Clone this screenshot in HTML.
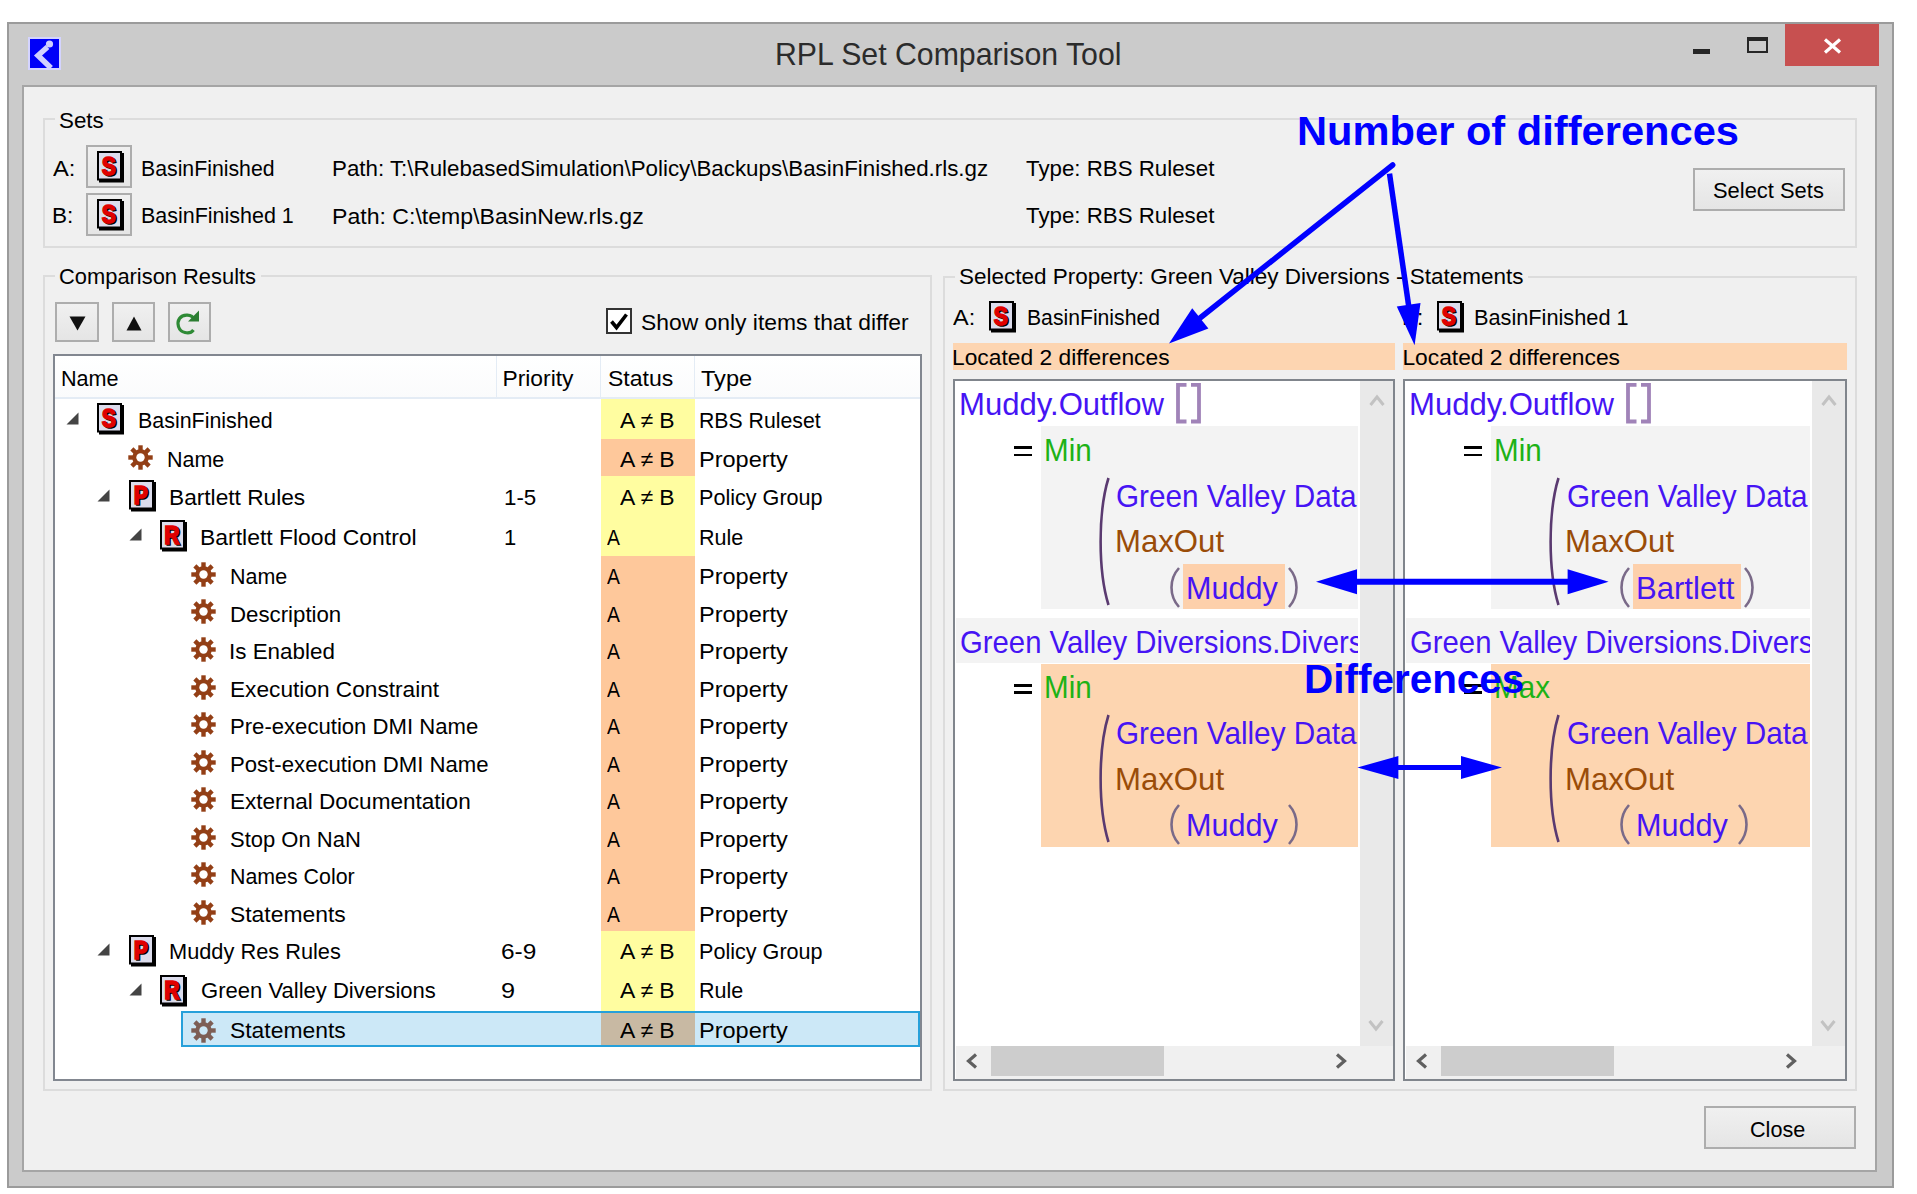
<!DOCTYPE html>
<html><head><meta charset="utf-8"><title>RPL Set Comparison Tool</title>
<style>
html,body{margin:0;padding:0;background:#fff;}
body{width:1917px;height:1194px;position:relative;overflow:hidden;font-family:"Liberation Sans",sans-serif;}
.t{position:absolute;white-space:pre;transform-origin:0 0;}
.r{position:absolute;}
svg.r{overflow:visible;}
</style></head><body>
<div class="r" style="left:7.0px;top:22.0px;width:1887.0px;height:1166.0px;background:#cbcbcb;border:2px solid #9b9b9b;box-sizing:border-box;"></div>
<svg class="r" style="left:28.0px;top:37.0px;" width="33" height="33" viewBox="0 0 33 33"><rect x="0" y="0" width="33" height="33" fill="#d4d4ff"/><rect x="2" y="2" width="29" height="29" fill="#0000f8"/><path d="M19.5 10 L 10 18.5 L 23 31" fill="none" stroke="#d0d0ff" stroke-width="5.5"/><circle cx="21.5" cy="7" r="3.6" fill="#d0d0ff"/><rect x="2" y="31" width="29" height="2" fill="#d4d4ff"/></svg>
<div class="t" style="left:775.48px;top:38.93px;font-size:31.5px;line-height:31.5px;color:#2b2b2b;font-weight:normal;transform:scaleX(0.9606);">RPL Set Comparison Tool</div>
<div class="r" style="left:1693.0px;top:49.0px;width:17.0px;height:4.5px;background:#262626;"></div>
<div class="r" style="left:1747.0px;top:36.6px;width:21.0px;height:16.4px;border:2px solid #262626;box-sizing:border-box;border-top-width:4px;"></div>
<div class="r" style="left:1785.0px;top:24.0px;width:93.5px;height:41.7px;background:#c75050;"></div>
<svg class="r" style="left:1823.0px;top:38.0px;" width="19" height="16" viewBox="0 0 19 16"><path d="M2 1.5 L17 14.5 M17 1.5 L2 14.5" stroke="#fff" stroke-width="3.2"/></svg>
<div class="r" style="left:22.0px;top:85.0px;width:1855.0px;height:1087.0px;background:#f0f0f0;border:2px solid #a5a5a5;box-sizing:border-box;"></div>
<div class="r" style="left:43.0px;top:118.0px;width:1814.0px;height:130.0px;border:2px solid #dcdcdc;box-sizing:border-box;"></div>
<div class="r" style="left:55.3px;top:114.0px;width:53.4px;height:9.0px;background:#f0f0f0;"></div>
<div class="t" style="left:59.32px;top:108.90px;font-size:22.8px;line-height:22.8px;color:#000;font-weight:normal;transform:scaleX(0.9815);">Sets</div>
<div class="t" style="left:52.90px;top:156.70px;font-size:22.8px;line-height:22.8px;color:#000;font-weight:normal;transform:scaleX(1.0393);">A:</div>
<div class="t" style="left:51.91px;top:204.40px;font-size:22.8px;line-height:22.8px;color:#000;font-weight:normal;transform:scaleX(0.9893);">B:</div>
<div class="r" style="left:86.4px;top:145.4px;width:45.6px;height:43.0px;background:linear-gradient(#f0f0f0,#e5e5e5);border:2px solid #adadad;box-sizing:border-box;"></div>
<svg class="r" style="left:97.0px;top:151.3px;" width="27" height="32" viewBox="0 0 27 32"><rect x="2" y="2" width="25" height="29.5" fill="#000"/><rect x="0" y="0" width="25" height="29.5" fill="#000"/><rect x="2" y="2" width="21" height="25.5" fill="#dcdcec"/><text transform="translate(13.2 25.0) scale(0.8 0.97)" text-anchor="middle" font-family="Liberation Sans" font-weight="bold" font-size="26" fill="#000" stroke="#000" stroke-width="1.6">S</text><text transform="translate(11.7 23.5) scale(0.8 0.97)" text-anchor="middle" font-family="Liberation Sans" font-weight="bold" font-size="26" fill="#e00000" stroke="#e00000" stroke-width="1.6">S</text></svg>
<div class="r" style="left:86.4px;top:193.3px;width:45.6px;height:43.0px;background:linear-gradient(#f0f0f0,#e5e5e5);border:2px solid #adadad;box-sizing:border-box;"></div>
<svg class="r" style="left:97.0px;top:199.2px;" width="27" height="32" viewBox="0 0 27 32"><rect x="2" y="2" width="25" height="29.5" fill="#000"/><rect x="0" y="0" width="25" height="29.5" fill="#000"/><rect x="2" y="2" width="21" height="25.5" fill="#dcdcec"/><text transform="translate(13.2 25.0) scale(0.8 0.97)" text-anchor="middle" font-family="Liberation Sans" font-weight="bold" font-size="26" fill="#000" stroke="#000" stroke-width="1.6">S</text><text transform="translate(11.7 23.5) scale(0.8 0.97)" text-anchor="middle" font-family="Liberation Sans" font-weight="bold" font-size="26" fill="#e00000" stroke="#e00000" stroke-width="1.6">S</text></svg>
<div class="t" style="left:141.47px;top:156.70px;font-size:22.8px;line-height:22.8px;color:#000;font-weight:normal;transform:scaleX(0.9328);">BasinFinished</div>
<div class="t" style="left:141.46px;top:204.40px;font-size:22.8px;line-height:22.8px;color:#000;font-weight:normal;transform:scaleX(0.9419);">BasinFinished 1</div>
<div class="t" style="left:331.92px;top:157.20px;font-size:22.8px;line-height:22.8px;color:#000;font-weight:normal;transform:scaleX(0.9794);">Path: T:\RulebasedSimulation\Policy\Backups\BasinFinished.rls.gz</div>
<div class="t" style="left:331.89px;top:204.70px;font-size:22.8px;line-height:22.8px;color:#000;font-weight:normal;transform:scaleX(1.0125);">Path: C:\temp\BasinNew.rls.gz</div>
<div class="t" style="left:1026.00px;top:156.90px;font-size:22.8px;line-height:22.8px;color:#000;font-weight:normal;transform:scaleX(0.9780);">Type: RBS Ruleset</div>
<div class="t" style="left:1026.00px;top:204.30px;font-size:22.8px;line-height:22.8px;color:#000;font-weight:normal;transform:scaleX(0.9780);">Type: RBS Ruleset</div>
<div class="r" style="left:1693.0px;top:168.2px;width:152.0px;height:42.9px;background:linear-gradient(#f0f0f0,#e5e5e5);border:2px solid #adadad;box-sizing:border-box;"></div>
<div class="t" style="left:1712.54px;top:179.30px;font-size:22.8px;line-height:22.8px;color:#000;font-weight:normal;transform:scaleX(0.9613);">Select Sets</div>
<div class="r" style="left:43.0px;top:275.0px;width:888.5px;height:816.0px;border:2px solid #dcdcdc;box-sizing:border-box;"></div>
<div class="r" style="left:55.3px;top:271.0px;width:205.7px;height:9.0px;background:#f0f0f0;"></div>
<div class="t" style="left:59.34px;top:265.10px;font-size:22.8px;line-height:22.8px;color:#000;font-weight:normal;transform:scaleX(0.9600);">Comparison Results</div>
<div class="r" style="left:55.3px;top:301.6px;width:43.4px;height:40.7px;background:linear-gradient(#f0f0f0,#e5e5e5);border:2px solid #adadad;box-sizing:border-box;"></div>
<div class="r" style="left:111.7px;top:301.6px;width:43.0px;height:40.7px;background:linear-gradient(#f0f0f0,#e5e5e5);border:2px solid #adadad;box-sizing:border-box;"></div>
<div class="r" style="left:168.0px;top:301.6px;width:43.0px;height:40.7px;background:linear-gradient(#f0f0f0,#e5e5e5);border:2px solid #adadad;box-sizing:border-box;"></div>
<svg class="r" style="left:69.0px;top:316.0px;" width="17" height="15" viewBox="0 0 17 15"><polygon points="0.5,0.5 16.5,0.5 8.5,14.5" fill="#111"/></svg>
<svg class="r" style="left:125.5px;top:315.5px;" width="16" height="15" viewBox="0 0 16 15"><polygon points="0.5,14.5 15.5,14.5 8,0.5" fill="#111"/></svg>
<svg class="r" style="left:175.0px;top:309.0px;" width="25" height="27" viewBox="0 0 25 27"><path d="M19.5 10.5 C 17 5, 8 4.5, 4.5 9.5 C 1.5 14, 3 22, 10 23.5 C 14 24.5, 17 23, 18.5 21" fill="none" stroke="#2e8a35" stroke-width="3.2"/><polygon points="24,1.5 24,12.5 13,12.5" fill="#2b7d31"/></svg>
<div class="r" style="left:605.6px;top:308.3px;width:26.5px;height:25.8px;background:#fff;border:2px solid #333;box-sizing:border-box;"></div>
<svg class="r" style="left:606.0px;top:309.0px;" width="26" height="26" viewBox="0 0 26 26"><path d="M5.5 12.5 L10.5 18.5 L20.5 5.5" fill="none" stroke="#000" stroke-width="3.6"/></svg>
<div class="t" style="left:641.00px;top:311.10px;font-size:22.8px;line-height:22.8px;color:#000;font-weight:normal;transform:scaleX(1.0028);">Show only items that differ</div>
<div class="r" style="left:53.0px;top:353.6px;width:869.0px;height:727.4px;background:#fff;border:2px solid #828790;box-sizing:border-box;"></div>
<div class="r" style="left:55.0px;top:355.6px;width:865.0px;height:42.4px;background:linear-gradient(#ffffff,#fafbfc);"></div>
<div class="r" style="left:55.0px;top:397.0px;width:865.0px;height:2.0px;background:#e4ecf5;"></div>
<div class="r" style="left:495.5px;top:356.0px;width:1.5px;height:42.0px;background:#e4ecf5;"></div>
<div class="r" style="left:599.5px;top:356.0px;width:1.5px;height:42.0px;background:#e4ecf5;"></div>
<div class="r" style="left:693.5px;top:356.0px;width:1.5px;height:42.0px;background:#e4ecf5;"></div>
<div class="t" style="left:60.95px;top:367.20px;font-size:22.8px;line-height:22.8px;color:#000;font-weight:normal;transform:scaleX(0.9470);">Name</div>
<div class="t" style="left:502.50px;top:366.50px;font-size:22.8px;line-height:22.8px;color:#000;font-weight:normal;">Priority</div>
<div class="t" style="left:607.59px;top:366.50px;font-size:22.8px;line-height:22.8px;color:#000;font-weight:normal;transform:scaleX(1.0106);">Status</div>
<div class="t" style="left:700.70px;top:366.50px;font-size:22.8px;line-height:22.8px;color:#000;font-weight:normal;transform:scaleX(1.0340);">Type</div>
<div class="r" style="left:601.0px;top:399.2px;width:94.0px;height:39.4px;background:#fffda0;"></div>
<svg class="r" style="left:65.8px;top:411.5px;" width="13" height="13" viewBox="0 0 13 13"><polygon points="12.5,0.5 12.5,12.5 0.5,12.5" fill="#444"/></svg>
<svg class="r" style="left:97.1px;top:403.4px;" width="27" height="32" viewBox="0 0 27 32"><rect x="2" y="2" width="25" height="29.5" fill="#000"/><rect x="0" y="0" width="25" height="29.5" fill="#000"/><rect x="2" y="2" width="21" height="25.5" fill="#dcdcec"/><text transform="translate(13.2 25.0) scale(0.8 0.97)" text-anchor="middle" font-family="Liberation Sans" font-weight="bold" font-size="26" fill="#000" stroke="#000" stroke-width="1.6">S</text><text transform="translate(11.7 23.5) scale(0.8 0.97)" text-anchor="middle" font-family="Liberation Sans" font-weight="bold" font-size="26" fill="#e00000" stroke="#e00000" stroke-width="1.6">S</text></svg>
<div class="t" style="left:137.76px;top:408.90px;font-size:22.8px;line-height:22.8px;color:#000;font-weight:normal;transform:scaleX(0.9398);">BasinFinished</div>
<div class="t" style="left:619.70px;top:408.90px;font-size:22.8px;line-height:22.8px;color:#000;font-weight:normal;transform:scaleX(1.0058);">A ≠ B</div>
<div class="t" style="left:699.27px;top:408.90px;font-size:22.8px;line-height:22.8px;color:#000;font-weight:normal;transform:scaleX(0.9319);">RBS Ruleset</div>
<div class="r" style="left:601.0px;top:438.6px;width:94.0px;height:37.6px;background:#fec89b;"></div>
<svg class="r" style="left:128.1px;top:445.0px;" width="25" height="25" viewBox="0 0 25 25"><rect x="10.3" y="0.3" width="4.4" height="24.4" fill="#933f16" transform="rotate(0 12.5 12.5)"/><rect x="10.3" y="0.3" width="4.4" height="24.4" fill="#933f16" transform="rotate(45 12.5 12.5)"/><rect x="10.3" y="0.3" width="4.4" height="24.4" fill="#933f16" transform="rotate(90 12.5 12.5)"/><rect x="10.3" y="0.3" width="4.4" height="24.4" fill="#933f16" transform="rotate(135 12.5 12.5)"/><circle cx="12.5" cy="12.5" r="8.3" fill="#933f16"/><circle cx="12.5" cy="12.5" r="4.2" fill="#fff"/></svg>
<div class="t" style="left:167.46px;top:448.10px;font-size:22.8px;line-height:22.8px;color:#000;font-weight:normal;transform:scaleX(0.9420);">Name</div>
<div class="t" style="left:619.70px;top:448.10px;font-size:22.8px;line-height:22.8px;color:#000;font-weight:normal;transform:scaleX(1.0058);">A ≠ B</div>
<div class="t" style="left:699.17px;top:448.10px;font-size:22.8px;line-height:22.8px;color:#000;font-weight:normal;transform:scaleX(1.0308);">Property</div>
<div class="r" style="left:601.0px;top:476.2px;width:94.0px;height:39.8px;background:#fffda0;"></div>
<svg class="r" style="left:97.2px;top:488.5px;" width="13" height="13" viewBox="0 0 13 13"><polygon points="12.5,0.5 12.5,12.5 0.5,12.5" fill="#444"/></svg>
<svg class="r" style="left:128.5px;top:480.4px;" width="27" height="32" viewBox="0 0 27 32"><rect x="2" y="2" width="25" height="29.5" fill="#000"/><rect x="0" y="0" width="25" height="29.5" fill="#000"/><rect x="2" y="2" width="21" height="25.5" fill="#dcdcec"/><text transform="translate(13.2 25.0) scale(0.8 0.97)" text-anchor="middle" font-family="Liberation Sans" font-weight="bold" font-size="26" fill="#000" stroke="#000" stroke-width="1.6">P</text><text transform="translate(11.7 23.5) scale(0.8 0.97)" text-anchor="middle" font-family="Liberation Sans" font-weight="bold" font-size="26" fill="#e00000" stroke="#e00000" stroke-width="1.6">P</text></svg>
<div class="t" style="left:169.10px;top:485.90px;font-size:22.8px;line-height:22.8px;color:#000;font-weight:normal;transform:scaleX(0.9953);">Bartlett Rules</div>
<div class="t" style="left:503.62px;top:485.90px;font-size:22.8px;line-height:22.8px;color:#000;font-weight:normal;transform:scaleX(0.9786);">1-5</div>
<div class="t" style="left:619.70px;top:485.90px;font-size:22.8px;line-height:22.8px;color:#000;font-weight:normal;transform:scaleX(1.0058);">A ≠ B</div>
<div class="t" style="left:699.25px;top:485.90px;font-size:22.8px;line-height:22.8px;color:#000;font-weight:normal;transform:scaleX(0.9470);">Policy Group</div>
<div class="r" style="left:601.0px;top:516.0px;width:94.0px;height:39.5px;background:#fffda0;"></div>
<svg class="r" style="left:128.6px;top:528.3px;" width="13" height="13" viewBox="0 0 13 13"><polygon points="12.5,0.5 12.5,12.5 0.5,12.5" fill="#444"/></svg>
<svg class="r" style="left:159.9px;top:520.2px;" width="27" height="32" viewBox="0 0 27 32"><rect x="2" y="2" width="25" height="29.5" fill="#000"/><rect x="0" y="0" width="25" height="29.5" fill="#000"/><rect x="2" y="2" width="21" height="25.5" fill="#dcdcec"/><text transform="translate(13.2 25.0) scale(0.8 0.97)" text-anchor="middle" font-family="Liberation Sans" font-weight="bold" font-size="26" fill="#000" stroke="#000" stroke-width="1.6">R</text><text transform="translate(11.7 23.5) scale(0.8 0.97)" text-anchor="middle" font-family="Liberation Sans" font-weight="bold" font-size="26" fill="#e00000" stroke="#e00000" stroke-width="1.6">R</text></svg>
<div class="t" style="left:200.49px;top:525.70px;font-size:22.8px;line-height:22.8px;color:#000;font-weight:normal;transform:scaleX(1.0059);">Bartlett Flood Control</div>
<div class="t" style="left:503.64px;top:525.70px;font-size:22.8px;line-height:22.8px;color:#000;font-weight:normal;transform:scaleX(0.9636);">1</div>
<div class="t" style="left:606.80px;top:525.70px;font-size:22.8px;line-height:22.8px;color:#000;font-weight:normal;transform:scaleX(0.8500);">A</div>
<div class="t" style="left:699.26px;top:525.70px;font-size:22.8px;line-height:22.8px;color:#000;font-weight:normal;transform:scaleX(0.9446);">Rule</div>
<div class="r" style="left:601.0px;top:555.5px;width:94.0px;height:37.5px;background:#fec89b;"></div>
<svg class="r" style="left:190.9px;top:561.9px;" width="25" height="25" viewBox="0 0 25 25"><rect x="10.3" y="0.3" width="4.4" height="24.4" fill="#933f16" transform="rotate(0 12.5 12.5)"/><rect x="10.3" y="0.3" width="4.4" height="24.4" fill="#933f16" transform="rotate(45 12.5 12.5)"/><rect x="10.3" y="0.3" width="4.4" height="24.4" fill="#933f16" transform="rotate(90 12.5 12.5)"/><rect x="10.3" y="0.3" width="4.4" height="24.4" fill="#933f16" transform="rotate(135 12.5 12.5)"/><circle cx="12.5" cy="12.5" r="8.3" fill="#933f16"/><circle cx="12.5" cy="12.5" r="4.2" fill="#fff"/></svg>
<div class="t" style="left:230.26px;top:565.00px;font-size:22.8px;line-height:22.8px;color:#000;font-weight:normal;transform:scaleX(0.9420);">Name</div>
<div class="t" style="left:606.80px;top:565.00px;font-size:22.8px;line-height:22.8px;color:#000;font-weight:normal;transform:scaleX(0.8500);">A</div>
<div class="t" style="left:699.17px;top:565.00px;font-size:22.8px;line-height:22.8px;color:#000;font-weight:normal;transform:scaleX(1.0308);">Property</div>
<div class="r" style="left:601.0px;top:593.0px;width:94.0px;height:37.5px;background:#fec89b;"></div>
<svg class="r" style="left:190.9px;top:599.4px;" width="25" height="25" viewBox="0 0 25 25"><rect x="10.3" y="0.3" width="4.4" height="24.4" fill="#933f16" transform="rotate(0 12.5 12.5)"/><rect x="10.3" y="0.3" width="4.4" height="24.4" fill="#933f16" transform="rotate(45 12.5 12.5)"/><rect x="10.3" y="0.3" width="4.4" height="24.4" fill="#933f16" transform="rotate(90 12.5 12.5)"/><rect x="10.3" y="0.3" width="4.4" height="24.4" fill="#933f16" transform="rotate(135 12.5 12.5)"/><circle cx="12.5" cy="12.5" r="8.3" fill="#933f16"/><circle cx="12.5" cy="12.5" r="4.2" fill="#fff"/></svg>
<div class="t" style="left:230.22px;top:602.53px;font-size:22.8px;line-height:22.8px;color:#000;font-weight:normal;transform:scaleX(0.9755);">Description</div>
<div class="t" style="left:606.80px;top:602.53px;font-size:22.8px;line-height:22.8px;color:#000;font-weight:normal;transform:scaleX(0.8500);">A</div>
<div class="t" style="left:699.17px;top:602.53px;font-size:22.8px;line-height:22.8px;color:#000;font-weight:normal;transform:scaleX(1.0308);">Property</div>
<div class="r" style="left:601.0px;top:630.6px;width:94.0px;height:37.5px;background:#fec89b;"></div>
<svg class="r" style="left:190.9px;top:637.0px;" width="25" height="25" viewBox="0 0 25 25"><rect x="10.3" y="0.3" width="4.4" height="24.4" fill="#933f16" transform="rotate(0 12.5 12.5)"/><rect x="10.3" y="0.3" width="4.4" height="24.4" fill="#933f16" transform="rotate(45 12.5 12.5)"/><rect x="10.3" y="0.3" width="4.4" height="24.4" fill="#933f16" transform="rotate(90 12.5 12.5)"/><rect x="10.3" y="0.3" width="4.4" height="24.4" fill="#933f16" transform="rotate(135 12.5 12.5)"/><circle cx="12.5" cy="12.5" r="8.3" fill="#933f16"/><circle cx="12.5" cy="12.5" r="4.2" fill="#fff"/></svg>
<div class="t" style="left:229.24px;top:640.06px;font-size:22.8px;line-height:22.8px;color:#000;font-weight:normal;transform:scaleX(0.9824);">Is Enabled</div>
<div class="t" style="left:606.80px;top:640.06px;font-size:22.8px;line-height:22.8px;color:#000;font-weight:normal;transform:scaleX(0.8500);">A</div>
<div class="t" style="left:699.17px;top:640.06px;font-size:22.8px;line-height:22.8px;color:#000;font-weight:normal;transform:scaleX(1.0308);">Property</div>
<div class="r" style="left:601.0px;top:668.1px;width:94.0px;height:37.5px;background:#fec89b;"></div>
<svg class="r" style="left:190.9px;top:674.5px;" width="25" height="25" viewBox="0 0 25 25"><rect x="10.3" y="0.3" width="4.4" height="24.4" fill="#933f16" transform="rotate(0 12.5 12.5)"/><rect x="10.3" y="0.3" width="4.4" height="24.4" fill="#933f16" transform="rotate(45 12.5 12.5)"/><rect x="10.3" y="0.3" width="4.4" height="24.4" fill="#933f16" transform="rotate(90 12.5 12.5)"/><rect x="10.3" y="0.3" width="4.4" height="24.4" fill="#933f16" transform="rotate(135 12.5 12.5)"/><circle cx="12.5" cy="12.5" r="8.3" fill="#933f16"/><circle cx="12.5" cy="12.5" r="4.2" fill="#fff"/></svg>
<div class="t" style="left:230.21px;top:677.59px;font-size:22.8px;line-height:22.8px;color:#000;font-weight:normal;transform:scaleX(0.9942);">Execution Constraint</div>
<div class="t" style="left:606.80px;top:677.59px;font-size:22.8px;line-height:22.8px;color:#000;font-weight:normal;transform:scaleX(0.8500);">A</div>
<div class="t" style="left:699.17px;top:677.59px;font-size:22.8px;line-height:22.8px;color:#000;font-weight:normal;transform:scaleX(1.0308);">Property</div>
<div class="r" style="left:601.0px;top:705.6px;width:94.0px;height:37.5px;background:#fec89b;"></div>
<svg class="r" style="left:190.9px;top:712.0px;" width="25" height="25" viewBox="0 0 25 25"><rect x="10.3" y="0.3" width="4.4" height="24.4" fill="#933f16" transform="rotate(0 12.5 12.5)"/><rect x="10.3" y="0.3" width="4.4" height="24.4" fill="#933f16" transform="rotate(45 12.5 12.5)"/><rect x="10.3" y="0.3" width="4.4" height="24.4" fill="#933f16" transform="rotate(90 12.5 12.5)"/><rect x="10.3" y="0.3" width="4.4" height="24.4" fill="#933f16" transform="rotate(135 12.5 12.5)"/><circle cx="12.5" cy="12.5" r="8.3" fill="#933f16"/><circle cx="12.5" cy="12.5" r="4.2" fill="#fff"/></svg>
<div class="t" style="left:230.23px;top:715.12px;font-size:22.8px;line-height:22.8px;color:#000;font-weight:normal;transform:scaleX(0.9699);">Pre-execution DMI Name</div>
<div class="t" style="left:606.80px;top:715.12px;font-size:22.8px;line-height:22.8px;color:#000;font-weight:normal;transform:scaleX(0.8500);">A</div>
<div class="t" style="left:699.17px;top:715.12px;font-size:22.8px;line-height:22.8px;color:#000;font-weight:normal;transform:scaleX(1.0308);">Property</div>
<div class="r" style="left:601.0px;top:743.1px;width:94.0px;height:37.5px;background:#fec89b;"></div>
<svg class="r" style="left:190.9px;top:749.5px;" width="25" height="25" viewBox="0 0 25 25"><rect x="10.3" y="0.3" width="4.4" height="24.4" fill="#933f16" transform="rotate(0 12.5 12.5)"/><rect x="10.3" y="0.3" width="4.4" height="24.4" fill="#933f16" transform="rotate(45 12.5 12.5)"/><rect x="10.3" y="0.3" width="4.4" height="24.4" fill="#933f16" transform="rotate(90 12.5 12.5)"/><rect x="10.3" y="0.3" width="4.4" height="24.4" fill="#933f16" transform="rotate(135 12.5 12.5)"/><circle cx="12.5" cy="12.5" r="8.3" fill="#933f16"/><circle cx="12.5" cy="12.5" r="4.2" fill="#fff"/></svg>
<div class="t" style="left:230.23px;top:752.65px;font-size:22.8px;line-height:22.8px;color:#000;font-weight:normal;transform:scaleX(0.9721);">Post-execution DMI Name</div>
<div class="t" style="left:606.80px;top:752.65px;font-size:22.8px;line-height:22.8px;color:#000;font-weight:normal;transform:scaleX(0.8500);">A</div>
<div class="t" style="left:699.17px;top:752.65px;font-size:22.8px;line-height:22.8px;color:#000;font-weight:normal;transform:scaleX(1.0308);">Property</div>
<div class="r" style="left:601.0px;top:780.7px;width:94.0px;height:37.5px;background:#fec89b;"></div>
<svg class="r" style="left:190.9px;top:787.1px;" width="25" height="25" viewBox="0 0 25 25"><rect x="10.3" y="0.3" width="4.4" height="24.4" fill="#933f16" transform="rotate(0 12.5 12.5)"/><rect x="10.3" y="0.3" width="4.4" height="24.4" fill="#933f16" transform="rotate(45 12.5 12.5)"/><rect x="10.3" y="0.3" width="4.4" height="24.4" fill="#933f16" transform="rotate(90 12.5 12.5)"/><rect x="10.3" y="0.3" width="4.4" height="24.4" fill="#933f16" transform="rotate(135 12.5 12.5)"/><circle cx="12.5" cy="12.5" r="8.3" fill="#933f16"/><circle cx="12.5" cy="12.5" r="4.2" fill="#fff"/></svg>
<div class="t" style="left:230.21px;top:790.18px;font-size:22.8px;line-height:22.8px;color:#000;font-weight:normal;transform:scaleX(0.9892);">External Documentation</div>
<div class="t" style="left:606.80px;top:790.18px;font-size:22.8px;line-height:22.8px;color:#000;font-weight:normal;transform:scaleX(0.8500);">A</div>
<div class="t" style="left:699.17px;top:790.18px;font-size:22.8px;line-height:22.8px;color:#000;font-weight:normal;transform:scaleX(1.0308);">Property</div>
<div class="r" style="left:601.0px;top:818.2px;width:94.0px;height:37.5px;background:#fec89b;"></div>
<svg class="r" style="left:190.9px;top:824.6px;" width="25" height="25" viewBox="0 0 25 25"><rect x="10.3" y="0.3" width="4.4" height="24.4" fill="#933f16" transform="rotate(0 12.5 12.5)"/><rect x="10.3" y="0.3" width="4.4" height="24.4" fill="#933f16" transform="rotate(45 12.5 12.5)"/><rect x="10.3" y="0.3" width="4.4" height="24.4" fill="#933f16" transform="rotate(90 12.5 12.5)"/><rect x="10.3" y="0.3" width="4.4" height="24.4" fill="#933f16" transform="rotate(135 12.5 12.5)"/><circle cx="12.5" cy="12.5" r="8.3" fill="#933f16"/><circle cx="12.5" cy="12.5" r="4.2" fill="#fff"/></svg>
<div class="t" style="left:230.24px;top:827.71px;font-size:22.8px;line-height:22.8px;color:#000;font-weight:normal;transform:scaleX(0.9646);">Stop On NaN</div>
<div class="t" style="left:606.80px;top:827.71px;font-size:22.8px;line-height:22.8px;color:#000;font-weight:normal;transform:scaleX(0.8500);">A</div>
<div class="t" style="left:699.17px;top:827.71px;font-size:22.8px;line-height:22.8px;color:#000;font-weight:normal;transform:scaleX(1.0308);">Property</div>
<div class="r" style="left:601.0px;top:855.7px;width:94.0px;height:37.5px;background:#fec89b;"></div>
<svg class="r" style="left:190.9px;top:862.1px;" width="25" height="25" viewBox="0 0 25 25"><rect x="10.3" y="0.3" width="4.4" height="24.4" fill="#933f16" transform="rotate(0 12.5 12.5)"/><rect x="10.3" y="0.3" width="4.4" height="24.4" fill="#933f16" transform="rotate(45 12.5 12.5)"/><rect x="10.3" y="0.3" width="4.4" height="24.4" fill="#933f16" transform="rotate(90 12.5 12.5)"/><rect x="10.3" y="0.3" width="4.4" height="24.4" fill="#933f16" transform="rotate(135 12.5 12.5)"/><circle cx="12.5" cy="12.5" r="8.3" fill="#933f16"/><circle cx="12.5" cy="12.5" r="4.2" fill="#fff"/></svg>
<div class="t" style="left:230.26px;top:865.24px;font-size:22.8px;line-height:22.8px;color:#000;font-weight:normal;transform:scaleX(0.9371);">Names Color</div>
<div class="t" style="left:606.80px;top:865.24px;font-size:22.8px;line-height:22.8px;color:#000;font-weight:normal;transform:scaleX(0.8500);">A</div>
<div class="t" style="left:699.17px;top:865.24px;font-size:22.8px;line-height:22.8px;color:#000;font-weight:normal;transform:scaleX(1.0308);">Property</div>
<div class="r" style="left:601.0px;top:893.3px;width:94.0px;height:37.5px;background:#fec89b;"></div>
<svg class="r" style="left:190.9px;top:899.7px;" width="25" height="25" viewBox="0 0 25 25"><rect x="10.3" y="0.3" width="4.4" height="24.4" fill="#933f16" transform="rotate(0 12.5 12.5)"/><rect x="10.3" y="0.3" width="4.4" height="24.4" fill="#933f16" transform="rotate(45 12.5 12.5)"/><rect x="10.3" y="0.3" width="4.4" height="24.4" fill="#933f16" transform="rotate(90 12.5 12.5)"/><rect x="10.3" y="0.3" width="4.4" height="24.4" fill="#933f16" transform="rotate(135 12.5 12.5)"/><circle cx="12.5" cy="12.5" r="8.3" fill="#933f16"/><circle cx="12.5" cy="12.5" r="4.2" fill="#fff"/></svg>
<div class="t" style="left:230.20px;top:902.77px;font-size:22.8px;line-height:22.8px;color:#000;font-weight:normal;transform:scaleX(1.0034);">Statements</div>
<div class="t" style="left:606.80px;top:902.77px;font-size:22.8px;line-height:22.8px;color:#000;font-weight:normal;transform:scaleX(0.8500);">A</div>
<div class="t" style="left:699.17px;top:902.77px;font-size:22.8px;line-height:22.8px;color:#000;font-weight:normal;transform:scaleX(1.0308);">Property</div>
<div class="r" style="left:601.0px;top:930.8px;width:94.0px;height:40.0px;background:#fffda0;"></div>
<svg class="r" style="left:97.2px;top:943.1px;" width="13" height="13" viewBox="0 0 13 13"><polygon points="12.5,0.5 12.5,12.5 0.5,12.5" fill="#444"/></svg>
<svg class="r" style="left:128.5px;top:935.0px;" width="27" height="32" viewBox="0 0 27 32"><rect x="2" y="2" width="25" height="29.5" fill="#000"/><rect x="0" y="0" width="25" height="29.5" fill="#000"/><rect x="2" y="2" width="21" height="25.5" fill="#dcdcec"/><text transform="translate(13.2 25.0) scale(0.8 0.97)" text-anchor="middle" font-family="Liberation Sans" font-weight="bold" font-size="26" fill="#000" stroke="#000" stroke-width="1.6">P</text><text transform="translate(11.7 23.5) scale(0.8 0.97)" text-anchor="middle" font-family="Liberation Sans" font-weight="bold" font-size="26" fill="#e00000" stroke="#e00000" stroke-width="1.6">P</text></svg>
<div class="t" style="left:169.14px;top:939.60px;font-size:22.8px;line-height:22.8px;color:#000;font-weight:normal;transform:scaleX(0.9551);">Muddy Res Rules</div>
<div class="t" style="left:500.63px;top:939.60px;font-size:22.8px;line-height:22.8px;color:#000;font-weight:normal;transform:scaleX(1.0713);">6-9</div>
<div class="t" style="left:619.70px;top:939.60px;font-size:22.8px;line-height:22.8px;color:#000;font-weight:normal;transform:scaleX(1.0058);">A ≠ B</div>
<div class="t" style="left:699.25px;top:939.60px;font-size:22.8px;line-height:22.8px;color:#000;font-weight:normal;transform:scaleX(0.9470);">Policy Group</div>
<div class="r" style="left:601.0px;top:970.8px;width:94.0px;height:40.5px;background:#fffda0;"></div>
<svg class="r" style="left:128.6px;top:983.1px;" width="13" height="13" viewBox="0 0 13 13"><polygon points="12.5,0.5 12.5,12.5 0.5,12.5" fill="#444"/></svg>
<svg class="r" style="left:159.9px;top:975.0px;" width="27" height="32" viewBox="0 0 27 32"><rect x="2" y="2" width="25" height="29.5" fill="#000"/><rect x="0" y="0" width="25" height="29.5" fill="#000"/><rect x="2" y="2" width="21" height="25.5" fill="#dcdcec"/><text transform="translate(13.2 25.0) scale(0.8 0.97)" text-anchor="middle" font-family="Liberation Sans" font-weight="bold" font-size="26" fill="#000" stroke="#000" stroke-width="1.6">R</text><text transform="translate(11.7 23.5) scale(0.8 0.97)" text-anchor="middle" font-family="Liberation Sans" font-weight="bold" font-size="26" fill="#e00000" stroke="#e00000" stroke-width="1.6">R</text></svg>
<div class="t" style="left:200.53px;top:979.10px;font-size:22.8px;line-height:22.8px;color:#000;font-weight:normal;transform:scaleX(0.9671);">Green Valley Diversions</div>
<div class="t" style="left:500.59px;top:979.10px;font-size:22.8px;line-height:22.8px;color:#000;font-weight:normal;transform:scaleX(1.1091);">9</div>
<div class="t" style="left:619.70px;top:979.10px;font-size:22.8px;line-height:22.8px;color:#000;font-weight:normal;transform:scaleX(1.0058);">A ≠ B</div>
<div class="t" style="left:699.26px;top:979.10px;font-size:22.8px;line-height:22.8px;color:#000;font-weight:normal;transform:scaleX(0.9446);">Rule</div>
<div class="r" style="left:180.6px;top:1011.3px;width:739.4px;height:35.7px;background:#cce8f7;border:2px solid #26a0da;box-sizing:border-box;"></div>
<div class="r" style="left:601.0px;top:1013.3px;width:94.0px;height:31.7px;background:#c8b9a3;"></div>
<svg class="r" style="left:190.9px;top:1017.7px;" width="25" height="25" viewBox="0 0 25 25"><rect x="10.3" y="0.3" width="4.4" height="24.4" fill="#7d5e55" transform="rotate(0 12.5 12.5)"/><rect x="10.3" y="0.3" width="4.4" height="24.4" fill="#7d5e55" transform="rotate(45 12.5 12.5)"/><rect x="10.3" y="0.3" width="4.4" height="24.4" fill="#7d5e55" transform="rotate(90 12.5 12.5)"/><rect x="10.3" y="0.3" width="4.4" height="24.4" fill="#7d5e55" transform="rotate(135 12.5 12.5)"/><circle cx="12.5" cy="12.5" r="8.3" fill="#7d5e55"/><circle cx="12.5" cy="12.5" r="4.2" fill="#cce8f7"/></svg>
<div class="t" style="left:230.20px;top:1018.70px;font-size:22.8px;line-height:22.8px;color:#000;font-weight:normal;transform:scaleX(1.0034);">Statements</div>
<div class="t" style="left:619.70px;top:1018.70px;font-size:22.8px;line-height:22.8px;color:#000;font-weight:normal;transform:scaleX(1.0058);">A ≠ B</div>
<div class="t" style="left:699.17px;top:1018.70px;font-size:22.8px;line-height:22.8px;color:#000;font-weight:normal;transform:scaleX(1.0308);">Property</div>
<div class="r" style="left:942.8px;top:276.0px;width:914.2px;height:815.0px;border:2px solid #dcdcdc;box-sizing:border-box;"></div>
<div class="r" style="left:955.0px;top:272.0px;width:573.2px;height:9.0px;background:#f0f0f0;"></div>
<div class="t" style="left:959.01px;top:265.20px;font-size:22.8px;line-height:22.8px;color:#000;font-weight:normal;transform:scaleX(0.9865);">Selected Property: Green Valley Diversions - Statements</div>
<div class="t" style="left:953.00px;top:305.70px;font-size:22.8px;line-height:22.8px;color:#000;font-weight:normal;transform:scaleX(1.0294);">A:</div>
<svg class="r" style="left:988.8px;top:301.3px;" width="27" height="32" viewBox="0 0 27 32"><rect x="2" y="2" width="25" height="29.5" fill="#000"/><rect x="0" y="0" width="25" height="29.5" fill="#000"/><rect x="2" y="2" width="21" height="25.5" fill="#dcdcec"/><text transform="translate(13.2 25.0) scale(0.8 0.97)" text-anchor="middle" font-family="Liberation Sans" font-weight="bold" font-size="26" fill="#000" stroke="#000" stroke-width="1.6">S</text><text transform="translate(11.7 23.5) scale(0.8 0.97)" text-anchor="middle" font-family="Liberation Sans" font-weight="bold" font-size="26" fill="#e00000" stroke="#e00000" stroke-width="1.6">S</text></svg>
<div class="t" style="left:1026.67px;top:305.70px;font-size:22.8px;line-height:22.8px;color:#000;font-weight:normal;transform:scaleX(0.9285);">BasinFinished</div>
<div class="t" style="left:1402.01px;top:305.70px;font-size:22.8px;line-height:22.8px;color:#000;font-weight:normal;transform:scaleX(0.9893);">B:</div>
<svg class="r" style="left:1436.7px;top:301.3px;" width="27" height="32" viewBox="0 0 27 32"><rect x="2" y="2" width="25" height="29.5" fill="#000"/><rect x="0" y="0" width="25" height="29.5" fill="#000"/><rect x="2" y="2" width="21" height="25.5" fill="#dcdcec"/><text transform="translate(13.2 25.0) scale(0.8 0.97)" text-anchor="middle" font-family="Liberation Sans" font-weight="bold" font-size="26" fill="#000" stroke="#000" stroke-width="1.6">S</text><text transform="translate(11.7 23.5) scale(0.8 0.97)" text-anchor="middle" font-family="Liberation Sans" font-weight="bold" font-size="26" fill="#e00000" stroke="#e00000" stroke-width="1.6">S</text></svg>
<div class="t" style="left:1474.05px;top:305.70px;font-size:22.8px;line-height:22.8px;color:#000;font-weight:normal;transform:scaleX(0.9531);">BasinFinished 1</div>
<div class="r" style="left:953.0px;top:343.1px;width:442.0px;height:27.1px;background:#fdd5b1;"></div>
<div class="t" style="left:952.00px;top:345.90px;font-size:22.8px;line-height:22.8px;color:#000;font-weight:normal;">Located 2 differences</div>
<div class="r" style="left:952.8px;top:379.0px;width:442.2px;height:701.6px;background:#fff;border:2px solid #80858c;box-sizing:border-box;"></div>
<div class="r" style="left:1360.0px;top:381.0px;width:33.0px;height:664.6px;background:#e9e9e9;"></div>
<svg class="r" style="left:1368.5px;top:393.0px;" width="16" height="14" viewBox="0 0 16 14"><path d="M1.5 12 L8 4 L14.5 12" fill="none" stroke="#c2c2c2" stroke-width="3"/></svg>
<svg class="r" style="left:1368.0px;top:1019.0px;" width="16" height="14" viewBox="0 0 16 14"><path d="M1.5 2 L8 10 L14.5 2" fill="none" stroke="#c2c2c2" stroke-width="3"/></svg>
<div class="r" style="left:955.5px;top:1045.6px;width:437.5px;height:33.0px;background:#f0f0f0;"></div>
<div class="r" style="left:991.0px;top:1045.6px;width:172.5px;height:30.8px;background:#cdcdcd;"></div>
<svg class="r" style="left:964.5px;top:1053.0px;" width="14" height="16" viewBox="0 0 14 16"><path d="M11 1.5 L3.5 8 L11 14.5" fill="none" stroke="#606060" stroke-width="3.2"/></svg>
<svg class="r" style="left:1333.5px;top:1053.0px;" width="14" height="16" viewBox="0 0 14 16"><path d="M3 1.5 L10.5 8 L3 14.5" fill="none" stroke="#606060" stroke-width="3.2"/></svg>
<div class="r" style="left:955.5px;top:381px;width:402.5px;height:664px;overflow:hidden">
<div class="t" style="left:3.13px;top:7.93px;font-size:31.5px;line-height:31.5px;color:#4614f4;font-weight:normal;transform:scaleX(0.9869);">Muddy.Outflow</div>
<svg class="r" style="left:220.5px;top:2px" width="26" height="41" viewBox="0 0 26 41"><path d="M10.5 1.8 L2 1.8 L2 38.5 L10.5 38.5 M15 1.8 L23 1.8 L23 38.5 L15 38.5" fill="none" stroke="#a083b8" stroke-width="3.8"/></svg>
<div class="r" style="left:85.5px;top:45.4px;width:318.0px;height:183.1px;background:#f3f3f3;"></div>
<div class="r" style="left:58.5px;top:65.3px;width:18.0px;height:2.7px;background:#000;"></div>
<div class="r" style="left:58.5px;top:72.8px;width:18.0px;height:2.7px;background:#000;"></div>
<div class="t" style="left:88.42px;top:53.53px;font-size:31.5px;line-height:31.5px;color:#1db216;font-weight:normal;transform:scaleX(0.9399);">Min</div>
<svg class="r" style="left:141.5px;top:95.80000000000001px" width="13" height="129" viewBox="0 0 13 129"><path d="M11.5 1 C 1 35, 1 94, 11.5 128" fill="none" stroke="#5a3a70" stroke-width="2.6"/></svg>
<div class="t" style="left:160.86px;top:99.63px;font-size:31.5px;line-height:31.5px;color:#4614f4;font-weight:normal;transform:scaleX(0.9429);">Green Valley Data</div>
<div class="t" style="left:159.12px;top:145.23px;font-size:31.5px;line-height:31.5px;color:#9a4c08;font-weight:normal;transform:scaleX(0.9887);">MaxOut</div>
<div class="r" style="left:227.1px;top:182.9px;width:102.0px;height:45.6px;background:#fdd0ab;"></div>
<svg class="r" style="left:211.5px;top:185.79999999999995px" width="14" height="41" viewBox="0 0 14 41"><path d="M12 1 C 2 12, 2 29, 12 40" fill="none" stroke="#7a6a88" stroke-width="2.6"/></svg>
<div class="t" style="left:230.46px;top:191.53px;font-size:31.5px;line-height:31.5px;color:#4614f4;font-weight:normal;transform:scaleX(0.9709);">Muddy</div>
<svg class="r" style="left:331.0px;top:185.79999999999995px" width="14" height="41" viewBox="0 0 14 41"><path d="M2 1 C 12 12, 12 29, 2 40" fill="none" stroke="#7a6a88" stroke-width="2.6"/></svg>
<div class="r" style="left:0.0px;top:237.4px;width:402.5px;height:44.9px;background:#f3f3f3;"></div>
<div class="t" style="left:4.17px;top:245.53px;font-size:31.5px;line-height:31.5px;color:#4614f4;font-weight:normal;transform:scaleX(0.9303);">Green Valley Diversions.Diversion</div>
<div class="r" style="left:85.5px;top:283.0px;width:318.0px;height:183.1px;background:#fdd5b0;"></div>
<div class="r" style="left:58.5px;top:302.9px;width:18.0px;height:2.7px;background:#000;"></div>
<div class="r" style="left:58.5px;top:310.4px;width:18.0px;height:2.7px;background:#000;"></div>
<div class="t" style="left:88.42px;top:291.13px;font-size:31.5px;line-height:31.5px;color:#1db216;font-weight:normal;transform:scaleX(0.9399);">Min</div>
<svg class="r" style="left:141.5px;top:333.4px" width="13" height="129" viewBox="0 0 13 129"><path d="M11.5 1 C 1 35, 1 94, 11.5 128" fill="none" stroke="#5a3a70" stroke-width="2.6"/></svg>
<div class="t" style="left:160.86px;top:337.23px;font-size:31.5px;line-height:31.5px;color:#4614f4;font-weight:normal;transform:scaleX(0.9429);">Green Valley Data</div>
<div class="t" style="left:159.12px;top:382.83px;font-size:31.5px;line-height:31.5px;color:#9a4c08;font-weight:normal;transform:scaleX(0.9887);">MaxOut</div>
<svg class="r" style="left:211.5px;top:423.4px" width="14" height="41" viewBox="0 0 14 41"><path d="M12 1 C 2 12, 2 29, 12 40" fill="none" stroke="#7a6a88" stroke-width="2.6"/></svg>
<div class="t" style="left:230.46px;top:429.13px;font-size:31.5px;line-height:31.5px;color:#4614f4;font-weight:normal;transform:scaleX(0.9709);">Muddy</div>
<svg class="r" style="left:331.0px;top:423.4px" width="14" height="41" viewBox="0 0 14 41"><path d="M2 1 C 12 12, 12 29, 2 40" fill="none" stroke="#7a6a88" stroke-width="2.6"/></svg>
</div>
<div class="r" style="left:1403.4px;top:343.1px;width:443.9px;height:27.1px;background:#fdd5b1;"></div>
<div class="t" style="left:1402.40px;top:345.90px;font-size:22.8px;line-height:22.8px;color:#000;font-weight:normal;">Located 2 differences</div>
<div class="r" style="left:1403.2px;top:379.0px;width:444.1px;height:701.6px;background:#fff;border:2px solid #80858c;box-sizing:border-box;"></div>
<div class="r" style="left:1812.3px;top:381.0px;width:33.0px;height:664.6px;background:#e9e9e9;"></div>
<svg class="r" style="left:1820.8px;top:393.0px;" width="16" height="14" viewBox="0 0 16 14"><path d="M1.5 12 L8 4 L14.5 12" fill="none" stroke="#c2c2c2" stroke-width="3"/></svg>
<svg class="r" style="left:1820.3px;top:1019.0px;" width="16" height="14" viewBox="0 0 16 14"><path d="M1.5 2 L8 10 L14.5 2" fill="none" stroke="#c2c2c2" stroke-width="3"/></svg>
<div class="r" style="left:1405.9px;top:1045.6px;width:439.4px;height:33.0px;background:#f0f0f0;"></div>
<div class="r" style="left:1441.4px;top:1045.6px;width:172.5px;height:30.8px;background:#cdcdcd;"></div>
<svg class="r" style="left:1414.9px;top:1053.0px;" width="14" height="16" viewBox="0 0 14 16"><path d="M11 1.5 L3.5 8 L11 14.5" fill="none" stroke="#606060" stroke-width="3.2"/></svg>
<svg class="r" style="left:1783.9px;top:1053.0px;" width="14" height="16" viewBox="0 0 14 16"><path d="M3 1.5 L10.5 8 L3 14.5" fill="none" stroke="#606060" stroke-width="3.2"/></svg>
<div class="r" style="left:1405.9px;top:381px;width:404.39999999999986px;height:664px;overflow:hidden">
<div class="t" style="left:3.13px;top:7.93px;font-size:31.5px;line-height:31.5px;color:#4614f4;font-weight:normal;transform:scaleX(0.9869);">Muddy.Outflow</div>
<svg class="r" style="left:220.5px;top:2px" width="26" height="41" viewBox="0 0 26 41"><path d="M10.5 1.8 L2 1.8 L2 38.5 L10.5 38.5 M15 1.8 L23 1.8 L23 38.5 L15 38.5" fill="none" stroke="#a083b8" stroke-width="3.8"/></svg>
<div class="r" style="left:85.5px;top:45.4px;width:319.9px;height:183.1px;background:#f3f3f3;"></div>
<div class="r" style="left:58.5px;top:65.3px;width:18.0px;height:2.7px;background:#000;"></div>
<div class="r" style="left:58.5px;top:72.8px;width:18.0px;height:2.7px;background:#000;"></div>
<div class="t" style="left:88.42px;top:53.53px;font-size:31.5px;line-height:31.5px;color:#1db216;font-weight:normal;transform:scaleX(0.9399);">Min</div>
<svg class="r" style="left:141.5px;top:95.80000000000001px" width="13" height="129" viewBox="0 0 13 129"><path d="M11.5 1 C 1 35, 1 94, 11.5 128" fill="none" stroke="#5a3a70" stroke-width="2.6"/></svg>
<div class="t" style="left:160.86px;top:99.63px;font-size:31.5px;line-height:31.5px;color:#4614f4;font-weight:normal;transform:scaleX(0.9429);">Green Valley Data</div>
<div class="t" style="left:159.12px;top:145.23px;font-size:31.5px;line-height:31.5px;color:#9a4c08;font-weight:normal;transform:scaleX(0.9887);">MaxOut</div>
<div class="r" style="left:227.1px;top:182.9px;width:108.0px;height:45.6px;background:#fdd0ab;"></div>
<svg class="r" style="left:211.5px;top:185.79999999999995px" width="14" height="41" viewBox="0 0 14 41"><path d="M12 1 C 2 12, 2 29, 12 40" fill="none" stroke="#7a6a88" stroke-width="2.6"/></svg>
<div class="t" style="left:230.43px;top:191.53px;font-size:31.5px;line-height:31.5px;color:#4614f4;font-weight:normal;transform:scaleX(0.9863);">Bartlett</div>
<svg class="r" style="left:337.0px;top:185.79999999999995px" width="14" height="41" viewBox="0 0 14 41"><path d="M2 1 C 12 12, 12 29, 2 40" fill="none" stroke="#7a6a88" stroke-width="2.6"/></svg>
<div class="r" style="left:0.0px;top:237.4px;width:404.4px;height:44.9px;background:#f3f3f3;"></div>
<div class="t" style="left:4.17px;top:245.53px;font-size:31.5px;line-height:31.5px;color:#4614f4;font-weight:normal;transform:scaleX(0.9303);">Green Valley Diversions.Diversion</div>
<div class="r" style="left:85.5px;top:283.0px;width:319.9px;height:183.1px;background:#fdd5b0;"></div>
<div class="r" style="left:58.5px;top:302.9px;width:18.0px;height:2.7px;background:#000;"></div>
<div class="r" style="left:58.5px;top:310.4px;width:18.0px;height:2.7px;background:#000;"></div>
<div class="t" style="left:88.42px;top:291.13px;font-size:31.5px;line-height:31.5px;color:#1db216;font-weight:normal;transform:scaleX(0.9399);">Max</div>
<svg class="r" style="left:141.5px;top:333.4px" width="13" height="129" viewBox="0 0 13 129"><path d="M11.5 1 C 1 35, 1 94, 11.5 128" fill="none" stroke="#5a3a70" stroke-width="2.6"/></svg>
<div class="t" style="left:160.86px;top:337.23px;font-size:31.5px;line-height:31.5px;color:#4614f4;font-weight:normal;transform:scaleX(0.9429);">Green Valley Data</div>
<div class="t" style="left:159.12px;top:382.83px;font-size:31.5px;line-height:31.5px;color:#9a4c08;font-weight:normal;transform:scaleX(0.9887);">MaxOut</div>
<svg class="r" style="left:211.5px;top:423.4px" width="14" height="41" viewBox="0 0 14 41"><path d="M12 1 C 2 12, 2 29, 12 40" fill="none" stroke="#7a6a88" stroke-width="2.6"/></svg>
<div class="t" style="left:230.46px;top:429.13px;font-size:31.5px;line-height:31.5px;color:#4614f4;font-weight:normal;transform:scaleX(0.9709);">Muddy</div>
<svg class="r" style="left:331.0px;top:423.4px" width="14" height="41" viewBox="0 0 14 41"><path d="M2 1 C 12 12, 12 29, 2 40" fill="none" stroke="#7a6a88" stroke-width="2.6"/></svg>
</div>
<div class="r" style="left:1703.6px;top:1106.0px;width:152.1px;height:43.0px;background:linear-gradient(#f0f0f0,#e5e5e5);border:2px solid #adadad;box-sizing:border-box;"></div>
<div class="t" style="left:1749.55px;top:1117.70px;font-size:22.8px;line-height:22.8px;color:#000;font-weight:normal;transform:scaleX(0.9469);">Close</div>
<div class="t" style="left:1297.38px;top:110.52px;font-size:41.2px;line-height:41.2px;color:#0000ff;font-weight:bold;transform:scaleX(1.0112);">Number of differences</div>
<div class="t" style="left:1303.54px;top:658.52px;font-size:41.2px;line-height:41.2px;color:#0000ff;font-weight:bold;transform:scaleX(0.9822);">Differences</div>
<svg class="r" style="left:0.0px;top:0.0px;" width="1917" height="1194" viewBox="0 0 1917 1194"><line x1="1392.7" y1="165" x2="1195" y2="322" stroke="#0000ff" stroke-width="5.5" stroke-linecap="round"/><polygon points="1169.0,343.4 1192.2,308.3 1208.4,328.6" fill="#0000ff"/><line x1="1389.5" y1="173.7" x2="1410" y2="315" stroke="#0000ff" stroke-width="5.5"/><polygon points="1414.6,345.2 1396.8,306.4 1420.5,302.9" fill="#0000ff"/><line x1="1340" y1="581.7" x2="1585" y2="581.7" stroke="#0000ff" stroke-width="6"/><polygon points="1316.0,581.7 1357.0,569.2 1357.0,594.2" fill="#0000ff"/><polygon points="1608.6,581.7 1567.6,594.2 1567.6,569.2" fill="#0000ff"/><line x1="1380" y1="767.5" x2="1480" y2="767.5" stroke="#0000ff" stroke-width="5"/><polygon points="1357.4,767.5 1398.4,756.0 1398.4,779.0" fill="#0000ff"/><polygon points="1502.0,767.5 1461.0,779.0 1461.0,756.0" fill="#0000ff"/></svg>
</body></html>
